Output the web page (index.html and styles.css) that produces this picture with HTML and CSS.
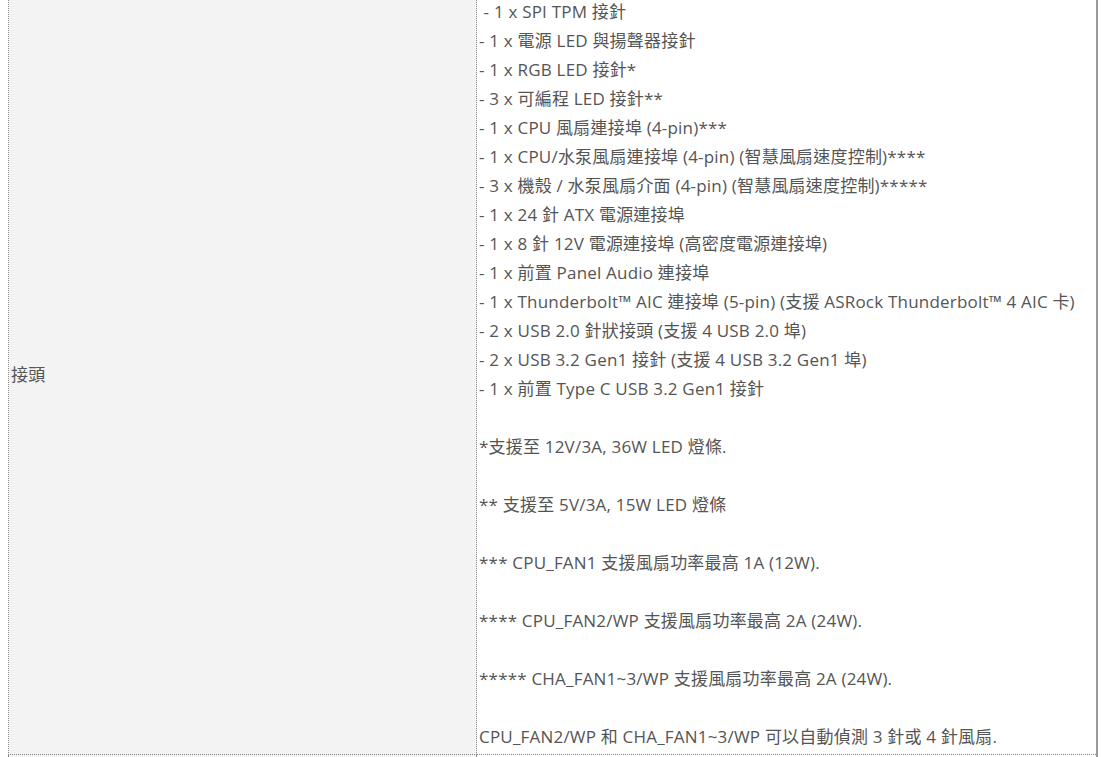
FILE: index.html
```html
<!DOCTYPE html>
<html lang="zh-Hant">
<head>
    <meta charset="UTF-8">
    <meta name="viewport" content="width=device-width, initial-scale=1.0">
    <title>規格</title>
    <link rel="stylesheet" href="styles.css">
</head>
<body>

<table class="spec-table">
    <tr>
        <td class="label">接頭</td>
        <td class="value">
            &nbsp;- 1 x SPI TPM 接針<br>
            - 1 x 電源 LED 與揚聲器接針<br>
            - 1 x RGB LED 接針*<br>
            - 3 x 可編程 LED 接針**<br>
            - 1 x CPU 風扇連接埠 (4-pin)***<br>
            - 1 x CPU/水泵風扇連接埠 (4-pin) (智慧風扇速度控制)****<br>
            - 3 x 機殼 / 水泵風扇介面 (4-pin) (智慧風扇速度控制)*****<br>
            - 1 x 24 針 ATX 電源連接埠<br>
            - 1 x 8 針 12V 電源連接埠 (高密度電源連接埠)<br>
            - 1 x 前置 Panel Audio 連接埠<br>
            - 1 x Thunderbolt™ AIC 連接埠 (5-pin) (支援 ASRock Thunderbolt™ 4 AIC 卡)<br>
            - 2 x USB 2.0 針狀接頭 (支援 4 USB 2.0 埠)<br>
            - 2 x USB 3.2 Gen1 接針 (支援 4 USB 3.2 Gen1 埠)<br>
            - 1 x 前置 Type C USB 3.2 Gen1 接針<br>
            <br>
            *支援至 12V/3A, 36W LED 燈條.<br>
            <br>
            ** 支援至 5V/3A, 15W LED 燈條<br>
            <br>
            *** CPU_FAN1 支援風扇功率最高 1A (12W).<br>
            <br>
            **** CPU_FAN2/WP 支援風扇功率最高 2A (24W).<br>
            <br>
            ***** CHA_FAN1~3/WP 支援風扇功率最高 2A (24W).<br>
            <br>
            CPU_FAN2/WP 和 CHA_FAN1~3/WP 可以自動偵測 3 針或 4 針風扇.
        </td>
    </tr>
    <tr class="next-row">
        <td class="label"></td>
        <td class="value"></td>
    </tr>
</table>

</body>
</html>
```

FILE: styles.css
```css
body {
    font-family: 'Open Sans', 'Noto Sans CJK TC', sans-serif;
    font-size: 17px;
    letter-spacing: 0.2px;
    color: #555;
    background-color: white;
    margin: 0 8px;
}

.spec-table {
    width: 1090px;
    margin-top: -5px;
    border-collapse: collapse;
    border-right: 2px solid #999;
}

.spec-table td {
    border: 1px dotted #888;
    padding: 1px 2px 3px 2px;
    line-height: 29px;
}

.spec-table .label {
    width: 463px;
    background-color: #f3f3f3;
    vertical-align: middle;
}

.spec-table .value {
    background-color: white;
    vertical-align: top;
}

.spec-table .next-row td {
    height: 29px;
}
```
